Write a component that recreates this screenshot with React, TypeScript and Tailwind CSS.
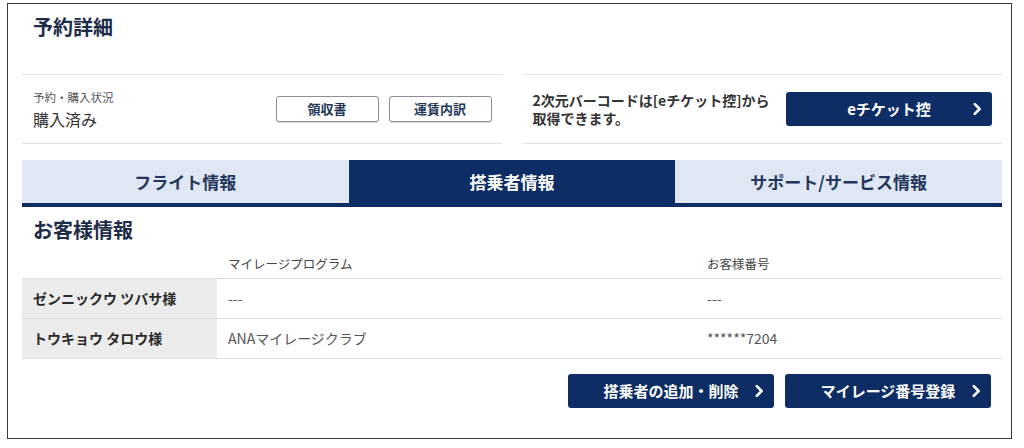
import React from "react";

const Chevron = () => (
  <svg width="9" height="13" viewBox="0 0 9 13" className="absolute right-[10px] top-1/2 -translate-y-1/2">
    <path d="M1.8 1.6 L6.6 6.5 L1.8 11.4" fill="none" stroke="white" strokeWidth="2.6" strokeLinecap="round" strokeLinejoin="round" />
  </svg>
);

const NavyButton = ({ label, w }: { label: string; w: string }) => (
  <button className={`relative flex h-[34px] shrink-0 ${w} items-center justify-center rounded-[3px] bg-[#0d2d64] text-[15px] font-bold text-white`}>
    <span>{label}</span>
    <Chevron />
  </button>
);

const OutlineButton = ({ label }: { label: string }) => (
  <button className="flex h-[26px] w-[103px] items-center justify-center rounded-[3px] border border-[#8a8f97] bg-white text-[13px] font-bold text-[#23365a] shadow-[0_1px_1px_rgba(0,0,0,0.15)]">
    {label}
  </button>
);

export default function App() {
  return (
    <div className="h-[448px] w-[1024px] bg-white pl-[7px] pt-[3px]" style={{ fontFamily: '"Noto Sans CJK JP", "Noto Sans", sans-serif' }}>
      <div className="h-[436px] w-[1005px] border-[1.5px] border-[#3a3a3a] pl-[14px] pr-[9px]">
        <div className="flex h-[70px] items-start pl-[11px] pt-[9px]">
          <h1 className="text-[20px] font-bold leading-[28px] text-[#1d2c48]">予約詳細</h1>
        </div>
        <div className="flex gap-[21px]">
          <div className="flex h-[70px] w-[480px] items-center justify-between border-y border-[#e3e3e3] pl-[11px] pr-[10px]">
            <div className="flex flex-col">
              <span className="text-[11.5px] leading-[16px] text-[#555]">予約・購入状況</span>
              <span className="mt-[3px] text-[16px] leading-[22px] text-[#333]">購入済み</span>
            </div>
            <div className="flex gap-[10px]">
              <OutlineButton label="領収書" />
              <OutlineButton label="運賃内訳" />
            </div>
          </div>
          <div className="flex h-[70px] w-[480px] items-center justify-between border-y border-[#e3e3e3] pl-[10px] pr-[10px]">
            <div className="flex flex-col text-[14px] font-bold leading-[18px] text-[#333]">
              <span>2次元バーコードは[eチケット控]から</span>
              <span>取得できます。</span>
            </div>
            <NavyButton label="eチケット控" w="w-[206px]" />
          </div>
        </div>
        <div className="mt-[16px] grid grid-cols-3 border-b-4 border-[#0d2d64]">
          <div className="flex h-[43px] items-center justify-center bg-[#e0e7f4] text-[17px] font-bold text-[#24365a]">フライト情報</div>
          <div className="flex h-[43px] items-center justify-center bg-[#0d2d64] text-[17px] font-bold text-white">搭乗者情報</div>
          <div className="flex h-[43px] items-center justify-center bg-[#e0e7f4] text-[17px] font-bold text-[#24365a]">サポート/サービス情報</div>
        </div>
        <div className="flex h-[44px] items-center pl-[11px] pt-[2px]">
          <h2 className="text-[20px] font-bold leading-[28px] text-[#1d2c48]">お客様情報</h2>
        </div>
        <div className="w-[980px]">
          <div className="grid h-[28px] grid-cols-[195px_490px_1fr] items-center border-b border-[#dcdcdc] text-[12.5px] text-[#444]">
            <div />
            <div className="pl-[11px]">マイレージプログラム</div>
            <div>お客様番号</div>
          </div>
          {[
            { name: "ゼンニックウ ツバサ様", prog: "---", num: "---" },
            { name: "トウキョウ タロウ様", prog: "ANAマイレージクラブ", num: "******7204" },
          ].map((r) => (
            <div key={r.name} className="grid h-[40px] grid-cols-[195px_490px_1fr] items-stretch border-b border-[#dcdcdc]">
              <div className="flex items-center bg-[#ececec] pl-[11px] text-[14px] font-bold text-[#2a2a2a]">{r.name}</div>
              <div className="flex items-center pl-[11px] text-[14px] text-[#555]">{r.prog}</div>
              <div className="flex items-center text-[14px] text-[#555]">{r.num}</div>
            </div>
          ))}
        </div>
        <div className="mt-[15px] flex w-[980px] justify-end gap-[11px] pr-[11px]">
          <NavyButton label="搭乗者の追加・削除" w="w-[206px]" />
          <NavyButton label="マイレージ番号登録" w="w-[206px]" />
        </div>
      </div>
    </div>
  );
}
